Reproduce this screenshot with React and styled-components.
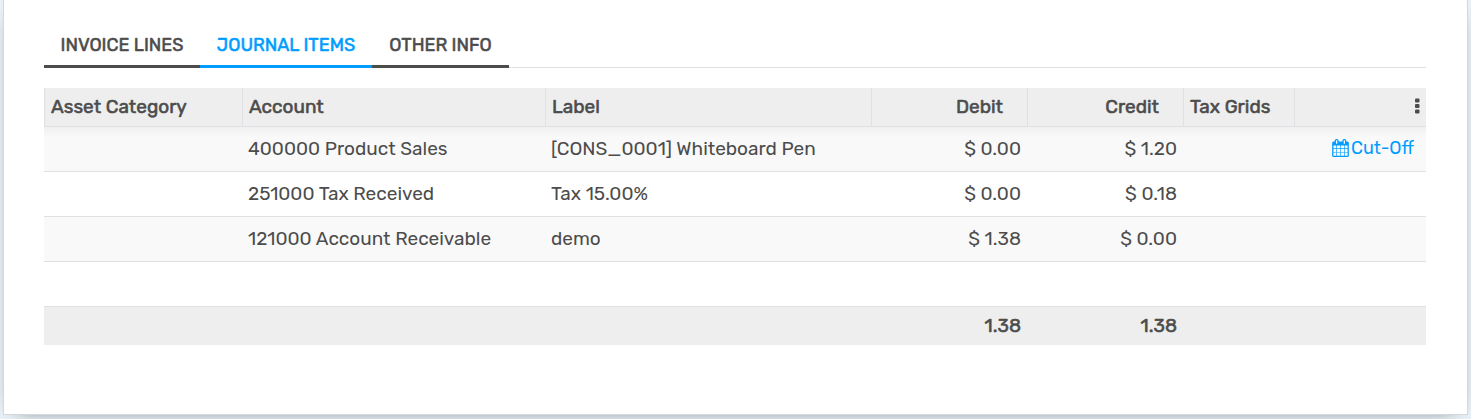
import React, { useState } from "react";
import styled, { createGlobalStyle } from "styled-components";

const ink = "#4c4c4c";
const blue = "#009dff";
const line = "#dee0e4";
const boldStroke = "0.03em";

const GlobalStyle = createGlobalStyle`
  * { box-sizing: border-box; }
  body {
    margin: 0;
    background: #e9f1f6;
    color: ${ink};
    font-family: Rubik, Roboto, "Liberation Sans", sans-serif;
    font-size: 19px;
    line-height: 24px;
  }
`;

const Page = styled.div`
  padding: 0 3px 4px;
  overflow: hidden;
`;

const Sheet = styled.main`
  padding: 22px 41px 69px 40px;
  background: #fff;
  border: 1px solid #d5d8db;
  border-top: 0;
  box-shadow: 0 5px 20px -15px #000;
`;

const TabList = styled.div`
  display: flex;
  margin-bottom: 20px;
  box-shadow: inset 0 -1px ${line};
`;

const Tab = styled.button`
  width: ${(p) => p.$width}px;
  height: 46px;
  padding: 2px 0 0;
  border: 0;
  border-bottom: 3px solid ${(p) => (p.$active ? blue : ink)};
  background: none;
  color: ${(p) => (p.$active ? blue : ink)};
  font: 400 18px/24px Rubik, Roboto, "Liberation Sans", sans-serif;
  -webkit-text-stroke: ${boldStroke};
  text-transform: uppercase;
  white-space: nowrap;
  cursor: pointer;
`;

const Table = styled.table`
  width: 100%;
  table-layout: fixed;
  border-collapse: separate;
  border-spacing: 0;
`;

const Col = styled.col`
  width: ${(p) => (p.$width ? `${p.$width}px` : "auto")};
`;

const HeadCell = styled.th`
  height: 39px;
  padding: 0 ${(p) => (p.$numeric ? 24 : 6)}px ${(p) => (p.$menu ? 4 : 0)}px 6px;
  background: #eee;
  border-left: 1px solid ${line};
  border-bottom: 1px solid ${line};
  font-weight: 400;
  -webkit-text-stroke: ${boldStroke};
  text-align: ${(p) => (p.$numeric || p.$menu ? "right" : "left")};
  white-space: nowrap;
`;

const Cell = styled.td`
  height: 45px;
  padding: 0 6px;
  border-bottom: 1px solid ${line};
  text-align: ${(p) => (p.$numeric ? "right" : "left")};
  white-space: nowrap;
`;

const ActionCell = styled(Cell)`
  padding: 0 12px 0 6px;
  text-align: right;
`;

const Row = styled.tr`
  &:nth-child(odd) { background: #f9f9f9; }
  &:first-child td {
    background: linear-gradient(#f0f0f1, #f9f9f9 10px);
  }
  &:last-child { background: #fff; }
`;

const TotalCell = styled.td`
  height: 38px;
  padding: 0 6px;
  background: #eee;
  -webkit-text-stroke: ${boldStroke};
  text-align: right;
`;

const MenuButton = styled.button`
  display: inline-flex;
  padding: 0;
  border: 0;
  background: none;
  color: ${ink};
  vertical-align: middle;
  cursor: pointer;
`;

const CutOff = styled.button`
  display: inline-flex;
  align-items: center;
  gap: 2px;
  padding: 0;
  border: 0;
  background: none;
  color: ${blue};
  font: 400 18px/24px Rubik, Roboto, "Liberation Sans", sans-serif;
  cursor: pointer;
`;

const CalendarIcon = () => (
  <svg width="17" height="18" viewBox="64 0 1664 1792" fill="currentColor" aria-hidden="true">
    <path d="M192 1664h288v-288h-288v288zM544 1664h320v-288h-320v288zM192 1312h288v-320h-288v320zM544 1312h320v-320h-320v320zM192 928h288v-288h-288v288zM928 1664h320v-288h-320v288zM544 928h320v-288h-320v288zM1312 1664h288v-288h-288v288zM928 1312h320v-320h-320v320zM576 448v-288q0-13-9.500-22.500t-22.500-9.500h-64q-13 0-22.500 9.500t-9.500 22.500v288q0 13 9.500 22.500t22.500 9.500h64q13 0 22.500-9.500t9.500-22.500zM1312 1312h288v-320h-288v320zM928 928h320v-288h-320v288zM1312 928h288v-288h-288v288zM1344 448v-288q0-13-9.500-22.500t-22.500-9.500h-64q-13 0-22.500 9.500t-9.500 22.500v288q0 13 9.500 22.500t22.500 9.500h64q13 0 22.500-9.500t9.500-22.500zM1728 384v1280q0 52-38 90t-90 38h-1408q-52 0-90-38t-38-90v-1280q0-52 38-90t90-38h128v-96q0-66 47-113t113-47h64q66 0 113 47t47 113v96h384v-96q0-66 47-113t113-47h64q66 0 113 47t47 113v96h128q52 0 90 38t38 90z" />
  </svg>
);

const DotsIcon = () => (
  <svg width="5" height="16" viewBox="0 0 5 16" fill="currentColor" aria-hidden="true">
    <rect y="0.500" width="4.500" height="4" rx="1" />
    <rect y="6" width="4.500" height="4" rx="1" />
    <rect y="11.500" width="4.500" height="4" rx="1" />
  </svg>
);

const tabs = [
  { name: "Invoice Lines", width: 156 },
  { name: "Journal Items", width: 172 },
  { name: "Other Info", width: 137 },
];

const items = [
  { account: "400000 Product Sales", label: "[CONS_0001] Whiteboard Pen", debit: "$ 0.00", credit: "$ 1.20", cutOff: true },
  { account: "251000 Tax Received", label: "Tax 15.00%", debit: "$ 0.00", credit: "$ 0.18" },
  { account: "121000 Account Receivable", label: "demo", debit: "$ 1.38", credit: "$ 0.00" },
];

export default function App() {
  const [active, setActive] = useState("Journal Items");
  return (
    <Page>
      <GlobalStyle />
      <Sheet>
        <TabList role="tablist">
          {tabs.map(({ name, width }) => (
            <Tab
              key={name}
              type="button"
              role="tab"
              aria-selected={name === active}
              $active={name === active}
              $width={width}
              onClick={() => setActive(name)}
            >
              {name}
            </Tab>
          ))}
        </TabList>
        <Table>
          <colgroup>
            <Col $width={198} />
            <Col $width={303} />
            <Col />
            <Col $width={156} />
            <Col $width={156} />
            <Col $width={111} />
            <Col $width={132} />
          </colgroup>
          <thead>
            <tr>
              <HeadCell>Asset Category</HeadCell>
              <HeadCell>Account</HeadCell>
              <HeadCell>Label</HeadCell>
              <HeadCell $numeric>Debit</HeadCell>
              <HeadCell $numeric>Credit</HeadCell>
              <HeadCell>Tax Grids</HeadCell>
              <HeadCell $menu>
                <MenuButton type="button" aria-label="Optional columns">
                  <DotsIcon />
                </MenuButton>
              </HeadCell>
            </tr>
          </thead>
          <tbody>
            {items.map((item) => (
              <Row key={item.account}>
                <Cell />
                <Cell>{item.account}</Cell>
                <Cell>{item.label}</Cell>
                <Cell $numeric>{item.debit}</Cell>
                <Cell $numeric>{item.credit}</Cell>
                <Cell />
                <ActionCell>
                  {item.cutOff && (
                    <CutOff type="button">
                      <CalendarIcon />
                      Cut-Off
                    </CutOff>
                  )}
                </ActionCell>
              </Row>
            ))}
            <Row>
              <Cell colSpan={7} />
            </Row>
          </tbody>
          <tfoot>
            <tr>
              <TotalCell colSpan={3} />
              <TotalCell>1.38</TotalCell>
              <TotalCell>1.38</TotalCell>
              <TotalCell colSpan={2} />
            </tr>
          </tfoot>
        </Table>
      </Sheet>
    </Page>
  );
}
